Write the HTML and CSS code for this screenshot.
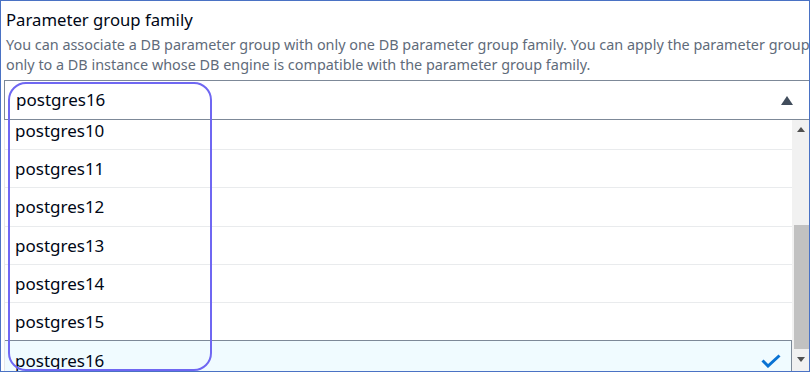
FILE: index.html
```html
<!DOCTYPE html>
<html lang="en">
<head>
    <meta charset="UTF-8">
    <meta name="viewport" content="width=device-width, initial-scale=1.0">
    <title>Parameter group family</title>
    <link rel="stylesheet" href="styles.css">
</head>
<body>
    <div class="frame">
        <div class="field">
            <div class="label">Parameter group family</div>
            <div class="description">You can associate a DB parameter group with only one DB parameter group family. You can apply the parameter group only to a DB instance whose DB engine is compatible with the parameter group family.</div>
            <div class="select">
                <span class="select-value">postgres16</span>
                <span class="caret"></span>
            </div>
            <div class="dropdown">
                <div class="options">
                    <div class="option">postgres10</div>
                    <div class="option">postgres11</div>
                    <div class="option">postgres12</div>
                    <div class="option">postgres13</div>
                    <div class="option">postgres14</div>
                    <div class="option">postgres15</div>
                    <div class="option selected">
                        <span>postgres16</span>
                        <svg class="check" width="20" height="14" viewBox="0 0 20 14">
                            <path d="M1.5 6.5 L7 12 L18.5 1.5" fill="none" stroke="#0972d3" stroke-width="3"/>
                        </svg>
                    </div>
                </div>
                <div class="scrollbar">
                    <span class="arrow up"></span>
                    <div class="track">
                        <div class="thumb"></div>
                    </div>
                    <span class="arrow down"></span>
                </div>
            </div>
        </div>
        <div class="highlight"></div>
    </div>
</body>
</html>
```

FILE: styles.css
```css
body {
    margin: 0;
    padding: 0;
    background: #ffffff;
    font-family: "Noto Sans", "Open Sans", Arial, sans-serif;
}
.frame {
    position: relative;
    width: 810px;
    height: 372px;
    box-sizing: border-box;
    border: 1px solid #4a72c4;
    overflow: hidden;
    background: #ffffff;
}
.field {
    width: 830px;
    padding: 8px 0 0 5px;
}
.label {
    font-size: 16.7px;
    line-height: 22px;
    color: #000716;
}
.description {
    font-size: 14.4px;
    line-height: 20px;
    color: #5f6b7a;
    width: 830px;
    margin-top: 4px;
}
.select {
    display: flex;
    align-items: center;
    justify-content: space-between;
    box-sizing: border-box;
    height: 40px;
    width: 830px;
    margin: 5px 0 0 -2px;
    padding: 0 28px 0 11px;
    border: 1px solid #7d8998;
    font-size: 17px;
    color: #000716;
}
.select-value {
    margin-top: -2px;
}
.caret {
    width: 0;
    height: 0;
    margin-right: 12px;
    border-left: 6px solid transparent;
    border-right: 6px solid transparent;
    border-bottom: 9px solid #414d5c;
}
.dropdown {
    display: flex;
    width: 805px;
    height: 253px;
    margin-left: -2px;
    border-left: 1px solid #e4e6e8;
    overflow: hidden;
}
.options {
    flex: 1;
    margin-top: -9.25px;
}
.option {
    display: flex;
    align-items: center;
    justify-content: space-between;
    box-sizing: border-box;
    height: 38.25px;
    padding: 0 10px 0 10px;
    border-top: 1px solid #e9ebed;
    font-size: 17px;
    color: #000716;
}
.option.selected {
    background: #f0fbff;
    border-top-color: #7d8998;
    border-right: 1px solid #7d8998;
    padding-top: 2px;
}
.scrollbar {
    display: flex;
    flex-direction: column;
    align-items: center;
    width: 18px;
    background: #f1f1f1;
}
.arrow {
    width: 0;
    height: 0;
    border-left: 4px solid transparent;
    border-right: 4px solid transparent;
}
.arrow.up {
    margin-top: 7px;
    border-bottom: 5px solid #505050;
}
.arrow.down {
    margin-bottom: 11px;
    border-top: 5px solid #505050;
}
.track {
    flex: 1;
    width: 100%;
    display: flex;
    flex-direction: column;
    justify-content: flex-end;
    padding-bottom: 8px;
}
.thumb {
    height: 124px;
    margin-left: 2px;
    background: #c1c1c1;
}
.highlight {
    position: absolute;
    left: 7px;
    top: 81px;
    width: 200px;
    height: 285px;
    border: 2px solid #6f67f2;
    border-radius: 18px;
}
```
